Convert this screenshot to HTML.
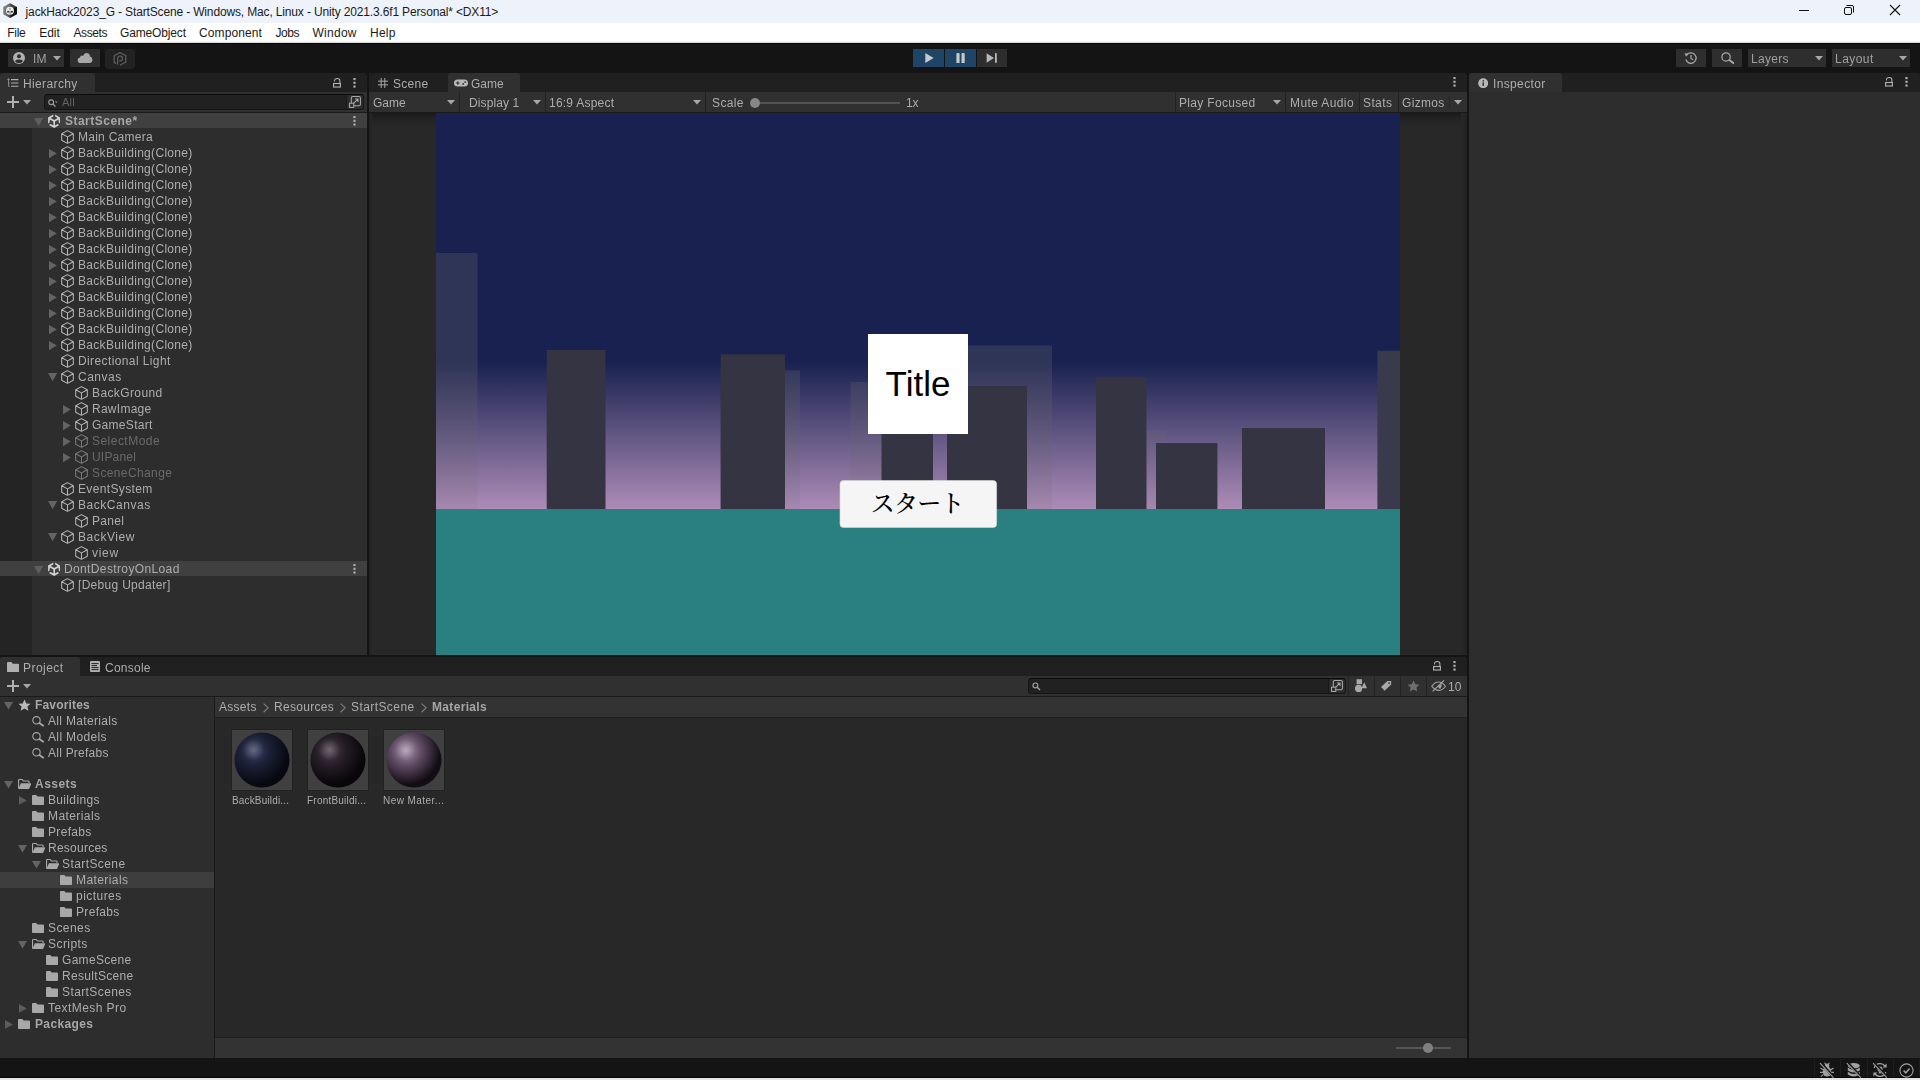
<!DOCTYPE html>
<html lang="en"><head><meta charset="utf-8"><title>Unity Editor</title>
<style>
html,body{margin:0;padding:0;background:#141414;}
body{width:1920px;height:1080px;overflow:hidden;position:relative;font-family:"Liberation Sans","Noto Sans CJK JP",sans-serif;font-size:12px;}
.b,.ic,.t{position:absolute;display:block}
.t{height:16px;line-height:16px;white-space:nowrap;color:#adadad;font-size:12px;letter-spacing:0.2px}
.t{will-change:transform}
.t.win{will-change:auto}
.t.bold{font-weight:bold;letter-spacing:0;color:#a6a6a6}
.t.win{color:#1a1a1a;font-size:12px;letter-spacing:0}
.t.sm{font-size:10px;letter-spacing:0.2px}
</style></head>
<body>
<div class="b" style="left:0px;top:0px;width:1920px;height:23px;background:#eef3fb;"></div>
<div class="b" style="left:0px;top:23px;width:1920px;height:20px;background:#ffffff;"></div>
<div class="b" style="left:0px;top:41px;width:1920px;height:1px;background:#f6f6f6;"></div>
<div class="b" style="left:0px;top:42px;width:1920px;height:1px;background:#dcdcdc;"></div>
<div class="b" style="left:0px;top:43px;width:1920px;height:1037px;background:#141414;"></div>
<div class="b" style="left:0px;top:43px;width:1920px;height:1px;background:#050505;"></div>
<svg class="ic" style="left:3px;top:3.2px" width="14.2" height="15.2" viewBox="0 0 14 15">
<defs><linearGradient id="ug" x1="0" y1="0" x2="1" y2="0"><stop offset="0" stop-color="#8a8a8a"/><stop offset="0.5" stop-color="#4a4a4a"/><stop offset="0.55" stop-color="#151515"/><stop offset="1" stop-color="#0a0a0a"/></linearGradient></defs>
<path d="M7 0.2 L13.8 3.9 V11.1 L7 14.8 L0.2 11.1 V3.9 Z" fill="url(#ug)"/>
<path d="M7 0.2 L13.8 3.9 L7 6 L0.2 3.9Z" fill="#9a9a9a" opacity="0.35"/>
<circle cx="6.9" cy="7.6" r="3.9" fill="#ececec"/>
<circle cx="6.9" cy="5.6" r="0.9" fill="#999"/><circle cx="5" cy="8.6" r="0.95" fill="#333"/><circle cx="8.8" cy="8.6" r="0.95" fill="#222"/>
<path d="M6.9 7.6 V11.2" stroke="#555" stroke-width="0.9"/>
</svg>
<div class="t win" style="left:25.6px;top:4px;letter-spacing:-0.15px;">jackHack2023_G - StartScene - Windows, Mac, Linux - Unity 2021.3.6f1 Personal* &lt;DX11&gt;</div>
<svg class="ic" style="left:1780px;top:0" width="140" height="23" viewBox="0 0 140 23"><path d="M19 10.5 H29" stroke="#111" stroke-width="1"/><rect x="64.5" y="7.5" width="7" height="7" rx="1.5" fill="none" stroke="#111" stroke-width="1"/><path d="M66.5 5.5 H72 Q73.5 5.5 73.5 7 V12.5" fill="none" stroke="#111" stroke-width="1"/><path d="M110 5 L120 15 M120 5 L110 15" stroke="#111" stroke-width="1.1"/></svg>
<div class="t win" style="left:7.2px;top:25px;letter-spacing:-0.26px;">File</div>
<div class="t win" style="left:39.2px;top:25px;letter-spacing:-0.02px;">Edit</div>
<div class="t win" style="left:73.5px;top:25px;letter-spacing:-0.40px;">Assets</div>
<div class="t win" style="left:120px;top:25px;letter-spacing:-0.15px;">GameObject</div>
<div class="t win" style="left:199px;top:25px;letter-spacing:0.10px;">Component</div>
<div class="t win" style="left:275.5px;top:25px;letter-spacing:-0.44px;">Jobs</div>
<div class="t win" style="left:312.5px;top:25px;letter-spacing:0.27px;">Window</div>
<div class="t win" style="left:370px;top:25px;letter-spacing:0.23px;">Help</div>
<div class="b" style="left:8px;top:49px;width:56px;height:18px;background:#2e2e2e;border-radius:1px"></div>
<div class="b" style="left:70px;top:49px;width:30px;height:18px;background:#2e2e2e;border-radius:1px"></div>
<div class="b" style="left:105px;top:49px;width:30px;height:20px;background:#222222;border-radius:3px"></div>
<svg class="ic" style="left:13px;top:52px" width="12" height="12" viewBox="0 0 12 12"><circle cx="6" cy="6" r="6" fill="#b0b0b0"/><circle cx="6" cy="4.3" r="2" fill="#2e2e2e"/><path d="M2.2 9.4 Q2.2 7.4 6 7.4 Q9.8 7.4 9.8 9.4 Q8.4 10.9 6 10.9 Q3.6 10.9 2.2 9.4Z" fill="#2e2e2e"/></svg>
<div class="t" style="left:33px;top:51px;color:#a0a0a0;letter-spacing:0.28px;">IM</div>
<svg class="ic" style="left:53px;top:56px" width="8" height="5" viewBox="0 0 8 5"><path d="M0 0 H8 L4 4.6 Z" fill="#a8a8a8"/></svg>
<svg class="ic" style="left:77px;top:52px" width="16" height="12" viewBox="0 0 16 12"><path d="M3.6 11 Q0.6 11 0.6 8.2 Q0.6 5.8 3 5.5 Q3.2 3.6 5 3.6 Q5.6 3.6 6 3.9 Q7 1 9.6 1 Q12.8 1 13 4.6 Q15.4 5 15.4 7.8 Q15.4 11 12.4 11 Z" fill="#a8a8a8"/></svg>
<svg class="ic" style="left:113px;top:52px" width="14" height="14" viewBox="0 0 14 14"><path d="M3.2 11.6 L1.2 10.4 V3.8 L7 0.6 L12.8 3.8 V10 L7 13.2" fill="none" stroke="#5e5e5e" stroke-width="1.25"/><path d="M4.6 12.6 V6.2 Q4.6 4.2 7 4.2 Q9.6 4.2 9.6 6.6 Q9.6 8.8 7.2 8.8 H6.2" fill="none" stroke="#5e5e5e" stroke-width="1.25"/></svg>
<div class="b" style="left:913px;top:49px;width:31px;height:18px;background:#1f4566;"></div>
<div class="b" style="left:945px;top:49px;width:31px;height:18px;background:#1f4566;"></div>
<div class="b" style="left:977px;top:49px;width:30px;height:18px;background:#2e2e2e;"></div>
<svg class="ic" style="left:924.6px;top:53px" width="9" height="10" viewBox="0 0 9 10"><path d="M0.3 0 L8.6 5 L0.3 10Z" fill="#c8c8c8"/></svg>
<svg class="ic" style="left:956.4px;top:52.8px" width="9" height="10.4" viewBox="0 0 9 10.4"><rect x="0.4" y="0" width="3.2" height="10.4" rx="1" fill="#c8c8c8"/><rect x="5.5" y="0" width="3.2" height="10.4" rx="1" fill="#c8c8c8"/></svg>
<svg class="ic" style="left:986px;top:53px" width="12" height="10" viewBox="0 0 12 10"><path d="M0.6 0.2 L8 5 L0.6 9.8Z" fill="#b8b8b8"/><rect x="9" y="0.2" width="1.8" height="9.6" fill="#b8b8b8"/></svg>
<div class="b" style="left:1676px;top:49px;width:30px;height:18px;background:#2e2e2e;"></div>
<div class="b" style="left:1712px;top:49px;width:30px;height:18px;background:#2e2e2e;"></div>
<div class="b" style="left:1748px;top:49px;width:78px;height:18px;background:#2e2e2e;"></div>
<div class="b" style="left:1832px;top:49px;width:78px;height:18px;background:#2e2e2e;"></div>
<svg class="ic" style="left:1684px;top:51px" width="14" height="14" viewBox="0 0 14 14"><path d="M2.6 4.2 A5.2 5.2 0 1 1 1.9 8.4" fill="none" stroke="#a8a8a8" stroke-width="1.3"/><path d="M0.6 2.2 L4.6 2.6 L2 5.8Z" fill="#a8a8a8"/><path d="M7 4 V7.4 L9.2 8.8" fill="none" stroke="#a8a8a8" stroke-width="1.2"/></svg>
<svg class="ic" style="left:1720.5px;top:52px" width="13.5" height="12" viewBox="0 0 12 10.5"><circle cx="4.5" cy="4.3" r="3.7" fill="none" stroke="#a8a8a8" stroke-width="1.1"/><path d="M7.4 7 L11.2 9.8" stroke="#a8a8a8" stroke-width="1.7" stroke-linecap="round"/></svg>
<div class="t" style="left:1750.5px;top:51px;color:#a0a0a0;letter-spacing:0.31px;">Layers</div>
<svg class="ic" style="left:1815px;top:55.7px" width="8" height="5" viewBox="0 0 8 5"><path d="M0 0 H8 L4 4.6 Z" fill="#a8a8a8"/></svg>
<div class="t" style="left:1834.5px;top:51px;color:#a0a0a0;letter-spacing:0.46px;">Layout</div>
<svg class="ic" style="left:1899px;top:55.7px" width="8" height="5" viewBox="0 0 8 5"><path d="M0 0 H8 L4 4.6 Z" fill="#a8a8a8"/></svg>
<div class="b" style="left:0px;top:73px;width:367px;height:582px;background:#2d2d2d;border-radius:0 4px 0 0"></div>
<div class="b" style="left:0px;top:73px;width:367px;height:19px;background:#202020;border-radius:0 4px 0 0"></div>
<div class="b" style="left:0px;top:73px;width:95px;height:19px;background:#303030;border-radius:3px 3px 0 0"></div>
<svg class="ic" style="left:7px;top:78px" width="12" height="10" viewBox="0 0 12 10"><path d="M4 1.6 H11.4 M4 5 H11.4 M4 8.2 H11.4" stroke="#b0b0b0" stroke-width="1.1"/><path d="M0.2 1.6 H2.8 M1.5 0.3 V8.4 M1.5 5 H2.8 M1.5 8.2 H2.8" stroke="#9a9a9a" stroke-width="0.8" fill="none"/></svg>
<div class="t" style="left:23px;top:76px;letter-spacing:0.37px;">Hierarchy</div>
<svg class="ic" style="left:332.8px;top:77.5px" width="8" height="10" viewBox="0 0 8 10"><path d="M1.5 3.4 V2.9 Q1.5 0.55 4.2 0.55 Q6.9 0.55 6.9 2.9 V5.4" fill="none" stroke="#b0b0b0" stroke-width="1.05"/><rect x="0.6" y="5.5" width="6.8" height="3.5" fill="none" stroke="#b0b0b0" stroke-width="1.15"/></svg>
<svg class="ic" style="left:352.6px;top:77.6px" width="3" height="10" viewBox="0 0 3 10"><rect x="0.4" y="0" width="2.2" height="2.1" fill="#b0b0b0"/><rect x="0.4" y="3.75" width="2.2" height="2.1" fill="#b0b0b0"/><rect x="0.4" y="7.5" width="2.2" height="2.1" fill="#b0b0b0"/></svg>
<div class="b" style="left:0px;top:92px;width:367px;height:20px;background:#303030;"></div>
<div class="b" style="left:0px;top:112px;width:367px;height:1px;background:#1a1a1a;"></div>
<svg class="ic" style="left:7px;top:96px" width="12" height="12" viewBox="0 0 12 12"><path d="M6 0 V12 M0 6 H12" stroke="#b0b0b0" stroke-width="2"/></svg>
<svg class="ic" style="left:23px;top:99.8px" width="8" height="5" viewBox="0 0 8 5"><path d="M0 0 H8 L4 4.6 Z" fill="#a8a8a8"/></svg>
<div class="b" style="left:43.5px;top:94px;width:320px;height:16px;background:#212121;border-radius:3.5px;border:1px solid #151515;border-top-color:#0c0c0c;box-sizing:border-box"></div><div class="b" style="left:345.5px;top:95px;width:17px;height:14px;background:#2c2c2c;border-radius:0 3px 3px 0;border-left:1px solid #171717;box-sizing:border-box"></div>
<svg class="ic" style="left:47.5px;top:98.5px" width="11" height="9" viewBox="0 0 11 9"><circle cx="3.2" cy="3.2" r="2.4" fill="none" stroke="#9a9a9a" stroke-width="1.15"/><path d="M5 5 L7.4 7.6" stroke="#9a9a9a" stroke-width="1.4"/><path d="M6.9 2.6 H9.7 L8.3 4.1Z" fill="#9a9a9a"/></svg>
<div class="t" style="left:62px;top:94px;color:#636363;font-size:11px;">All</div>
<svg class="ic" style="left:349px;top:96px" width="12" height="12" viewBox="0 0 12 12"><rect x="2.3" y="0.55" width="9.1" height="9.1" rx="1.4" fill="none" stroke="#a8a8a8" stroke-width="1.05"/><path d="M4.8 7.2 L8.8 3.2 M6 3 H9 V6" fill="none" stroke="#a8a8a8" stroke-width="1.05"/><rect x="0.55" y="7.2" width="4.2" height="4.2" fill="#2c2c2c" stroke="#a8a8a8" stroke-width="1.05"/></svg>
<div class="b" style="left:0px;top:113px;width:32px;height:542px;background:#242424;"></div>
<div class="b" style="left:0px;top:113px;width:367px;height:15px;background:#404040;"></div>
<svg class="ic" style="left:33.9px;top:117.6px" width="9.2" height="8.2" viewBox="0 0 10 8" preserveAspectRatio="none"><path d="M0 0 H10 L5 8 Z" fill="#5e5e5e"/></svg>
<svg class="ic" style="left:47.8px;top:113.8px" width="12.4" height="14" viewBox="0 0 12.4 14"><polygon points="6.2,0.1 12.3,3.55 12.3,10.45 6.2,13.9 0.1,10.45 0.1,3.55" fill="#d4d4d4"/><polygon points="6.20,1.93 9.86,4.00 6.20,6.07 2.54,4.00" fill="#404040"/><polygon points="10.69,5.40 10.69,9.54 7.03,11.61 7.03,7.47" fill="#404040"/><polygon points="1.71,5.40 5.37,7.47 5.37,11.61 1.71,9.54" fill="#404040"/><path d="M6.20 4.00 L6.20 -0.50 M8.86 8.50 L12.82 10.75 M3.54 8.50 L-0.42 10.75" stroke="#404040" stroke-width="1.9"/></svg>
<div class="t bold" style="left:64.7px;top:113px;letter-spacing:0.48px;">StartScene*</div>
<svg class="ic" style="left:353.1px;top:116.1px" width="3" height="10" viewBox="0 0 3 10"><rect x="0.4" y="0" width="2.2" height="2.1" fill="#b0b0b0"/><rect x="0.4" y="3.75" width="2.2" height="2.1" fill="#b0b0b0"/><rect x="0.4" y="7.5" width="2.2" height="2.1" fill="#b0b0b0"/></svg>
<svg class="ic" style="left:60px;top:129px;opacity:1" width="15" height="16" viewBox="0 0 15 16"><path d="M7.5 1.6 L13.3 4.7 V11.3 L7.5 14.4 L1.7 11.3 V4.7 Z M1.7 4.7 L7.5 7.9 L13.3 4.7 M7.5 7.9 V14.4" fill="none" stroke="#b4b4b4" stroke-width="1.05" stroke-linejoin="round"/></svg>
<div class="t" style="left:77.6px;top:129px;letter-spacing:0.26px;">Main Camera</div>
<svg class="ic" style="left:49.2px;top:148.6px" width="7.8" height="9.2" viewBox="0 0 8 10" preserveAspectRatio="none"><path d="M0 0 L8 5 L0 10 Z" fill="#646464"/></svg>
<svg class="ic" style="left:60px;top:145px;opacity:1" width="15" height="16" viewBox="0 0 15 16"><path d="M7.5 1.6 L13.3 4.7 V11.3 L7.5 14.4 L1.7 11.3 V4.7 Z M1.7 4.7 L7.5 7.9 L13.3 4.7 M7.5 7.9 V14.4" fill="none" stroke="#b4b4b4" stroke-width="1.05" stroke-linejoin="round"/></svg>
<div class="t" style="left:77.6px;top:145px;letter-spacing:0.31px;">BackBuilding(Clone)</div>
<svg class="ic" style="left:49.2px;top:164.6px" width="7.8" height="9.2" viewBox="0 0 8 10" preserveAspectRatio="none"><path d="M0 0 L8 5 L0 10 Z" fill="#646464"/></svg>
<svg class="ic" style="left:60px;top:161px;opacity:1" width="15" height="16" viewBox="0 0 15 16"><path d="M7.5 1.6 L13.3 4.7 V11.3 L7.5 14.4 L1.7 11.3 V4.7 Z M1.7 4.7 L7.5 7.9 L13.3 4.7 M7.5 7.9 V14.4" fill="none" stroke="#b4b4b4" stroke-width="1.05" stroke-linejoin="round"/></svg>
<div class="t" style="left:77.6px;top:161px;letter-spacing:0.31px;">BackBuilding(Clone)</div>
<svg class="ic" style="left:49.2px;top:180.6px" width="7.8" height="9.2" viewBox="0 0 8 10" preserveAspectRatio="none"><path d="M0 0 L8 5 L0 10 Z" fill="#646464"/></svg>
<svg class="ic" style="left:60px;top:177px;opacity:1" width="15" height="16" viewBox="0 0 15 16"><path d="M7.5 1.6 L13.3 4.7 V11.3 L7.5 14.4 L1.7 11.3 V4.7 Z M1.7 4.7 L7.5 7.9 L13.3 4.7 M7.5 7.9 V14.4" fill="none" stroke="#b4b4b4" stroke-width="1.05" stroke-linejoin="round"/></svg>
<div class="t" style="left:77.6px;top:177px;letter-spacing:0.31px;">BackBuilding(Clone)</div>
<svg class="ic" style="left:49.2px;top:196.6px" width="7.8" height="9.2" viewBox="0 0 8 10" preserveAspectRatio="none"><path d="M0 0 L8 5 L0 10 Z" fill="#646464"/></svg>
<svg class="ic" style="left:60px;top:193px;opacity:1" width="15" height="16" viewBox="0 0 15 16"><path d="M7.5 1.6 L13.3 4.7 V11.3 L7.5 14.4 L1.7 11.3 V4.7 Z M1.7 4.7 L7.5 7.9 L13.3 4.7 M7.5 7.9 V14.4" fill="none" stroke="#b4b4b4" stroke-width="1.05" stroke-linejoin="round"/></svg>
<div class="t" style="left:77.6px;top:193px;letter-spacing:0.31px;">BackBuilding(Clone)</div>
<svg class="ic" style="left:49.2px;top:212.6px" width="7.8" height="9.2" viewBox="0 0 8 10" preserveAspectRatio="none"><path d="M0 0 L8 5 L0 10 Z" fill="#646464"/></svg>
<svg class="ic" style="left:60px;top:209px;opacity:1" width="15" height="16" viewBox="0 0 15 16"><path d="M7.5 1.6 L13.3 4.7 V11.3 L7.5 14.4 L1.7 11.3 V4.7 Z M1.7 4.7 L7.5 7.9 L13.3 4.7 M7.5 7.9 V14.4" fill="none" stroke="#b4b4b4" stroke-width="1.05" stroke-linejoin="round"/></svg>
<div class="t" style="left:77.6px;top:209px;letter-spacing:0.31px;">BackBuilding(Clone)</div>
<svg class="ic" style="left:49.2px;top:228.6px" width="7.8" height="9.2" viewBox="0 0 8 10" preserveAspectRatio="none"><path d="M0 0 L8 5 L0 10 Z" fill="#646464"/></svg>
<svg class="ic" style="left:60px;top:225px;opacity:1" width="15" height="16" viewBox="0 0 15 16"><path d="M7.5 1.6 L13.3 4.7 V11.3 L7.5 14.4 L1.7 11.3 V4.7 Z M1.7 4.7 L7.5 7.9 L13.3 4.7 M7.5 7.9 V14.4" fill="none" stroke="#b4b4b4" stroke-width="1.05" stroke-linejoin="round"/></svg>
<div class="t" style="left:77.6px;top:225px;letter-spacing:0.31px;">BackBuilding(Clone)</div>
<svg class="ic" style="left:49.2px;top:244.6px" width="7.8" height="9.2" viewBox="0 0 8 10" preserveAspectRatio="none"><path d="M0 0 L8 5 L0 10 Z" fill="#646464"/></svg>
<svg class="ic" style="left:60px;top:241px;opacity:1" width="15" height="16" viewBox="0 0 15 16"><path d="M7.5 1.6 L13.3 4.7 V11.3 L7.5 14.4 L1.7 11.3 V4.7 Z M1.7 4.7 L7.5 7.9 L13.3 4.7 M7.5 7.9 V14.4" fill="none" stroke="#b4b4b4" stroke-width="1.05" stroke-linejoin="round"/></svg>
<div class="t" style="left:77.6px;top:241px;letter-spacing:0.31px;">BackBuilding(Clone)</div>
<svg class="ic" style="left:49.2px;top:260.6px" width="7.8" height="9.2" viewBox="0 0 8 10" preserveAspectRatio="none"><path d="M0 0 L8 5 L0 10 Z" fill="#646464"/></svg>
<svg class="ic" style="left:60px;top:257px;opacity:1" width="15" height="16" viewBox="0 0 15 16"><path d="M7.5 1.6 L13.3 4.7 V11.3 L7.5 14.4 L1.7 11.3 V4.7 Z M1.7 4.7 L7.5 7.9 L13.3 4.7 M7.5 7.9 V14.4" fill="none" stroke="#b4b4b4" stroke-width="1.05" stroke-linejoin="round"/></svg>
<div class="t" style="left:77.6px;top:257px;letter-spacing:0.31px;">BackBuilding(Clone)</div>
<svg class="ic" style="left:49.2px;top:276.6px" width="7.8" height="9.2" viewBox="0 0 8 10" preserveAspectRatio="none"><path d="M0 0 L8 5 L0 10 Z" fill="#646464"/></svg>
<svg class="ic" style="left:60px;top:273px;opacity:1" width="15" height="16" viewBox="0 0 15 16"><path d="M7.5 1.6 L13.3 4.7 V11.3 L7.5 14.4 L1.7 11.3 V4.7 Z M1.7 4.7 L7.5 7.9 L13.3 4.7 M7.5 7.9 V14.4" fill="none" stroke="#b4b4b4" stroke-width="1.05" stroke-linejoin="round"/></svg>
<div class="t" style="left:77.6px;top:273px;letter-spacing:0.31px;">BackBuilding(Clone)</div>
<svg class="ic" style="left:49.2px;top:292.6px" width="7.8" height="9.2" viewBox="0 0 8 10" preserveAspectRatio="none"><path d="M0 0 L8 5 L0 10 Z" fill="#646464"/></svg>
<svg class="ic" style="left:60px;top:289px;opacity:1" width="15" height="16" viewBox="0 0 15 16"><path d="M7.5 1.6 L13.3 4.7 V11.3 L7.5 14.4 L1.7 11.3 V4.7 Z M1.7 4.7 L7.5 7.9 L13.3 4.7 M7.5 7.9 V14.4" fill="none" stroke="#b4b4b4" stroke-width="1.05" stroke-linejoin="round"/></svg>
<div class="t" style="left:77.6px;top:289px;letter-spacing:0.31px;">BackBuilding(Clone)</div>
<svg class="ic" style="left:49.2px;top:308.6px" width="7.8" height="9.2" viewBox="0 0 8 10" preserveAspectRatio="none"><path d="M0 0 L8 5 L0 10 Z" fill="#646464"/></svg>
<svg class="ic" style="left:60px;top:305px;opacity:1" width="15" height="16" viewBox="0 0 15 16"><path d="M7.5 1.6 L13.3 4.7 V11.3 L7.5 14.4 L1.7 11.3 V4.7 Z M1.7 4.7 L7.5 7.9 L13.3 4.7 M7.5 7.9 V14.4" fill="none" stroke="#b4b4b4" stroke-width="1.05" stroke-linejoin="round"/></svg>
<div class="t" style="left:77.6px;top:305px;letter-spacing:0.31px;">BackBuilding(Clone)</div>
<svg class="ic" style="left:49.2px;top:324.6px" width="7.8" height="9.2" viewBox="0 0 8 10" preserveAspectRatio="none"><path d="M0 0 L8 5 L0 10 Z" fill="#646464"/></svg>
<svg class="ic" style="left:60px;top:321px;opacity:1" width="15" height="16" viewBox="0 0 15 16"><path d="M7.5 1.6 L13.3 4.7 V11.3 L7.5 14.4 L1.7 11.3 V4.7 Z M1.7 4.7 L7.5 7.9 L13.3 4.7 M7.5 7.9 V14.4" fill="none" stroke="#b4b4b4" stroke-width="1.05" stroke-linejoin="round"/></svg>
<div class="t" style="left:77.6px;top:321px;letter-spacing:0.31px;">BackBuilding(Clone)</div>
<svg class="ic" style="left:49.2px;top:340.6px" width="7.8" height="9.2" viewBox="0 0 8 10" preserveAspectRatio="none"><path d="M0 0 L8 5 L0 10 Z" fill="#646464"/></svg>
<svg class="ic" style="left:60px;top:337px;opacity:1" width="15" height="16" viewBox="0 0 15 16"><path d="M7.5 1.6 L13.3 4.7 V11.3 L7.5 14.4 L1.7 11.3 V4.7 Z M1.7 4.7 L7.5 7.9 L13.3 4.7 M7.5 7.9 V14.4" fill="none" stroke="#b4b4b4" stroke-width="1.05" stroke-linejoin="round"/></svg>
<div class="t" style="left:77.6px;top:337px;letter-spacing:0.31px;">BackBuilding(Clone)</div>
<svg class="ic" style="left:60px;top:353px;opacity:1" width="15" height="16" viewBox="0 0 15 16"><path d="M7.5 1.6 L13.3 4.7 V11.3 L7.5 14.4 L1.7 11.3 V4.7 Z M1.7 4.7 L7.5 7.9 L13.3 4.7 M7.5 7.9 V14.4" fill="none" stroke="#b4b4b4" stroke-width="1.05" stroke-linejoin="round"/></svg>
<div class="t" style="left:77.6px;top:353px;letter-spacing:0.39px;">Directional Light</div>
<svg class="ic" style="left:48.3px;top:373.2px" width="9.2" height="8.2" viewBox="0 0 10 8" preserveAspectRatio="none"><path d="M0 0 H10 L5 8 Z" fill="#646464"/></svg>
<svg class="ic" style="left:60px;top:369px;opacity:1" width="15" height="16" viewBox="0 0 15 16"><path d="M7.5 1.6 L13.3 4.7 V11.3 L7.5 14.4 L1.7 11.3 V4.7 Z M1.7 4.7 L7.5 7.9 L13.3 4.7 M7.5 7.9 V14.4" fill="none" stroke="#b4b4b4" stroke-width="1.05" stroke-linejoin="round"/></svg>
<div class="t" style="left:77.6px;top:369px;letter-spacing:0.50px;">Canvas</div>
<svg class="ic" style="left:74px;top:385px;opacity:1" width="15" height="16" viewBox="0 0 15 16"><path d="M7.5 1.6 L13.3 4.7 V11.3 L7.5 14.4 L1.7 11.3 V4.7 Z M1.7 4.7 L7.5 7.9 L13.3 4.7 M7.5 7.9 V14.4" fill="none" stroke="#b4b4b4" stroke-width="1.05" stroke-linejoin="round"/></svg>
<div class="t" style="left:91.6px;top:385px;letter-spacing:0.39px;">BackGround</div>
<svg class="ic" style="left:63.2px;top:404.6px" width="7.8" height="9.2" viewBox="0 0 8 10" preserveAspectRatio="none"><path d="M0 0 L8 5 L0 10 Z" fill="#646464"/></svg>
<svg class="ic" style="left:74px;top:401px;opacity:1" width="15" height="16" viewBox="0 0 15 16"><path d="M7.5 1.6 L13.3 4.7 V11.3 L7.5 14.4 L1.7 11.3 V4.7 Z M1.7 4.7 L7.5 7.9 L13.3 4.7 M7.5 7.9 V14.4" fill="none" stroke="#b4b4b4" stroke-width="1.05" stroke-linejoin="round"/></svg>
<div class="t" style="left:91.6px;top:401px;letter-spacing:0.26px;">RawImage</div>
<svg class="ic" style="left:63.2px;top:420.6px" width="7.8" height="9.2" viewBox="0 0 8 10" preserveAspectRatio="none"><path d="M0 0 L8 5 L0 10 Z" fill="#646464"/></svg>
<svg class="ic" style="left:74px;top:417px;opacity:1" width="15" height="16" viewBox="0 0 15 16"><path d="M7.5 1.6 L13.3 4.7 V11.3 L7.5 14.4 L1.7 11.3 V4.7 Z M1.7 4.7 L7.5 7.9 L13.3 4.7 M7.5 7.9 V14.4" fill="none" stroke="#b4b4b4" stroke-width="1.05" stroke-linejoin="round"/></svg>
<div class="t" style="left:91.6px;top:417px;letter-spacing:0.29px;">GameStart</div>
<svg class="ic" style="left:63.2px;top:436.6px" width="7.8" height="9.2" viewBox="0 0 8 10" preserveAspectRatio="none"><path d="M0 0 L8 5 L0 10 Z" fill="#646464"/></svg>
<svg class="ic" style="left:74px;top:433px;opacity:1" width="15" height="16" viewBox="0 0 15 16"><path d="M7.5 1.6 L13.3 4.7 V11.3 L7.5 14.4 L1.7 11.3 V4.7 Z M1.7 4.7 L7.5 7.9 L13.3 4.7 M7.5 7.9 V14.4" fill="none" stroke="#7a7a7a" stroke-width="1.05" stroke-linejoin="round"/></svg>
<div class="t" style="left:91.6px;top:433px;color:#6a6a6a;letter-spacing:0.47px;">SelectMode</div>
<svg class="ic" style="left:63.2px;top:452.6px" width="7.8" height="9.2" viewBox="0 0 8 10" preserveAspectRatio="none"><path d="M0 0 L8 5 L0 10 Z" fill="#646464"/></svg>
<svg class="ic" style="left:74px;top:449px;opacity:1" width="15" height="16" viewBox="0 0 15 16"><path d="M7.5 1.6 L13.3 4.7 V11.3 L7.5 14.4 L1.7 11.3 V4.7 Z M1.7 4.7 L7.5 7.9 L13.3 4.7 M7.5 7.9 V14.4" fill="none" stroke="#7a7a7a" stroke-width="1.05" stroke-linejoin="round"/></svg>
<div class="t" style="left:91.6px;top:449px;color:#6a6a6a;letter-spacing:0.20px;">UIPanel</div>
<svg class="ic" style="left:74px;top:465px;opacity:1" width="15" height="16" viewBox="0 0 15 16"><path d="M7.5 1.6 L13.3 4.7 V11.3 L7.5 14.4 L1.7 11.3 V4.7 Z M1.7 4.7 L7.5 7.9 L13.3 4.7 M7.5 7.9 V14.4" fill="none" stroke="#7a7a7a" stroke-width="1.05" stroke-linejoin="round"/></svg>
<div class="t" style="left:91.6px;top:465px;color:#6a6a6a;letter-spacing:0.38px;">SceneChange</div>
<svg class="ic" style="left:60px;top:481px;opacity:1" width="15" height="16" viewBox="0 0 15 16"><path d="M7.5 1.6 L13.3 4.7 V11.3 L7.5 14.4 L1.7 11.3 V4.7 Z M1.7 4.7 L7.5 7.9 L13.3 4.7 M7.5 7.9 V14.4" fill="none" stroke="#b4b4b4" stroke-width="1.05" stroke-linejoin="round"/></svg>
<div class="t" style="left:77.6px;top:481px;letter-spacing:0.36px;">EventSystem</div>
<svg class="ic" style="left:48.3px;top:501.2px" width="9.2" height="8.2" viewBox="0 0 10 8" preserveAspectRatio="none"><path d="M0 0 H10 L5 8 Z" fill="#646464"/></svg>
<svg class="ic" style="left:60px;top:497px;opacity:1" width="15" height="16" viewBox="0 0 15 16"><path d="M7.5 1.6 L13.3 4.7 V11.3 L7.5 14.4 L1.7 11.3 V4.7 Z M1.7 4.7 L7.5 7.9 L13.3 4.7 M7.5 7.9 V14.4" fill="none" stroke="#b4b4b4" stroke-width="1.05" stroke-linejoin="round"/></svg>
<div class="t" style="left:77.6px;top:497px;letter-spacing:0.53px;">BackCanvas</div>
<svg class="ic" style="left:74px;top:513px;opacity:1" width="15" height="16" viewBox="0 0 15 16"><path d="M7.5 1.6 L13.3 4.7 V11.3 L7.5 14.4 L1.7 11.3 V4.7 Z M1.7 4.7 L7.5 7.9 L13.3 4.7 M7.5 7.9 V14.4" fill="none" stroke="#b4b4b4" stroke-width="1.05" stroke-linejoin="round"/></svg>
<div class="t" style="left:91.6px;top:513px;letter-spacing:0.32px;">Panel</div>
<svg class="ic" style="left:48.3px;top:533.2px" width="9.2" height="8.2" viewBox="0 0 10 8" preserveAspectRatio="none"><path d="M0 0 H10 L5 8 Z" fill="#646464"/></svg>
<svg class="ic" style="left:60px;top:529px;opacity:1" width="15" height="16" viewBox="0 0 15 16"><path d="M7.5 1.6 L13.3 4.7 V11.3 L7.5 14.4 L1.7 11.3 V4.7 Z M1.7 4.7 L7.5 7.9 L13.3 4.7 M7.5 7.9 V14.4" fill="none" stroke="#b4b4b4" stroke-width="1.05" stroke-linejoin="round"/></svg>
<div class="t" style="left:77.6px;top:529px;letter-spacing:0.57px;">BackView</div>
<svg class="ic" style="left:74px;top:545px;opacity:1" width="15" height="16" viewBox="0 0 15 16"><path d="M7.5 1.6 L13.3 4.7 V11.3 L7.5 14.4 L1.7 11.3 V4.7 Z M1.7 4.7 L7.5 7.9 L13.3 4.7 M7.5 7.9 V14.4" fill="none" stroke="#b4b4b4" stroke-width="1.05" stroke-linejoin="round"/></svg>
<div class="t" style="left:91.6px;top:545px;letter-spacing:0.70px;">view</div>
<div class="b" style="left:0px;top:561px;width:367px;height:15px;background:#404040;"></div>
<svg class="ic" style="left:33.9px;top:565.6px" width="9.2" height="8.2" viewBox="0 0 10 8" preserveAspectRatio="none"><path d="M0 0 H10 L5 8 Z" fill="#5e5e5e"/></svg>
<svg class="ic" style="left:47.8px;top:561.8px" width="12.4" height="14" viewBox="0 0 12.4 14"><polygon points="6.2,0.1 12.3,3.55 12.3,10.45 6.2,13.9 0.1,10.45 0.1,3.55" fill="#d4d4d4"/><polygon points="6.20,1.93 9.86,4.00 6.20,6.07 2.54,4.00" fill="#404040"/><polygon points="10.69,5.40 10.69,9.54 7.03,11.61 7.03,7.47" fill="#404040"/><polygon points="1.71,5.40 5.37,7.47 5.37,11.61 1.71,9.54" fill="#404040"/><path d="M6.20 4.00 L6.20 -0.50 M8.86 8.50 L12.82 10.75 M3.54 8.50 L-0.42 10.75" stroke="#404040" stroke-width="1.9"/></svg>
<div class="t" style="left:63.7px;top:561px;letter-spacing:0.37px;">DontDestroyOnLoad</div>
<svg class="ic" style="left:353.1px;top:564.1px" width="3" height="10" viewBox="0 0 3 10"><rect x="0.4" y="0" width="2.2" height="2.1" fill="#b0b0b0"/><rect x="0.4" y="3.75" width="2.2" height="2.1" fill="#b0b0b0"/><rect x="0.4" y="7.5" width="2.2" height="2.1" fill="#b0b0b0"/></svg>
<svg class="ic" style="left:60px;top:577px;opacity:1" width="15" height="16" viewBox="0 0 15 16"><path d="M7.5 1.6 L13.3 4.7 V11.3 L7.5 14.4 L1.7 11.3 V4.7 Z M1.7 4.7 L7.5 7.9 L13.3 4.7 M7.5 7.9 V14.4" fill="none" stroke="#b4b4b4" stroke-width="1.05" stroke-linejoin="round"/></svg>
<div class="t" style="left:77.6px;top:577px;letter-spacing:0.30px;">[Debug Updater]</div>
<div class="b" style="left:369px;top:73px;width:1098px;height:582px;background:#282828;border-radius:0 4px 0 0"></div>
<div class="b" style="left:369px;top:113px;width:1098px;height:14px;background:linear-gradient(#1a1a1a,#222222 35%,#282828);"></div>
<div class="b" style="left:369px;top:113px;width:3px;height:542px;background:linear-gradient(90deg,#202020,#282828);"></div>
<div class="b" style="left:1461px;top:113px;width:6px;height:542px;background:linear-gradient(90deg,#282828,#222222);"></div>
<div class="b" style="left:369px;top:73px;width:1098px;height:19px;background:#202020;border-radius:0 4px 0 0"></div>
<div class="b" style="left:448px;top:73px;width:72px;height:19px;background:#303030;border-radius:3px 3px 0 0"></div>
<svg class="ic" style="left:377.5px;top:78px" width="10" height="10" viewBox="0 0 10 10"><path d="M3.2 0 V10 M6.8 0 V10 M0 3.2 H10 M0 6.8 H10" stroke="#a8a8a8" stroke-width="1"/></svg>
<div class="t" style="left:393px;top:76px;letter-spacing:0.30px;">Scene</div>
<svg class="ic" style="left:454px;top:79px" width="14" height="8" viewBox="0 0 14 8"><rect x="0" y="0.4" width="14" height="7.2" rx="3.6" fill="#b8b8b8"/><path d="M3.8 2.2 V5.8 M2 4 H5.6" stroke="#303030" stroke-width="1.1"/><circle cx="9.2" cy="4.9" r="0.9" fill="#303030"/><circle cx="11.2" cy="3.1" r="0.9" fill="#303030"/></svg>
<div class="t" style="left:470.7px;top:76px;letter-spacing:0.01px;">Game</div>
<svg class="ic" style="left:1452.7px;top:77.1px" width="3" height="10" viewBox="0 0 3 10"><rect x="0.4" y="0" width="2.2" height="2.1" fill="#b0b0b0"/><rect x="0.4" y="3.75" width="2.2" height="2.1" fill="#b0b0b0"/><rect x="0.4" y="7.5" width="2.2" height="2.1" fill="#b0b0b0"/></svg>
<div class="b" style="left:369px;top:92px;width:1098px;height:20px;background:#303030;"></div>
<div class="b" style="left:369px;top:112px;width:1098px;height:1px;background:#1a1a1a;"></div>
<div class="b" style="left:459px;top:92px;width:1px;height:20px;background:#222222;"></div>
<div class="b" style="left:545px;top:92px;width:1px;height:20px;background:#222222;"></div>
<div class="b" style="left:705px;top:92px;width:1px;height:20px;background:#222222;"></div>
<div class="b" style="left:1175px;top:92px;width:1px;height:20px;background:#222222;"></div>
<div class="b" style="left:1285px;top:92px;width:1px;height:20px;background:#222222;"></div>
<div class="b" style="left:1359px;top:92px;width:1px;height:20px;background:#222222;"></div>
<div class="b" style="left:1398px;top:92px;width:1px;height:20px;background:#222222;"></div>
<div class="b" style="left:1449px;top:96px;width:1px;height:12px;background:#262626;"></div>
<div class="t" style="left:372.7px;top:95px;letter-spacing:0.01px;">Game</div>
<svg class="ic" style="left:447.3px;top:100px" width="8" height="5" viewBox="0 0 8 5"><path d="M0 0 H8 L4 4.6 Z" fill="#a8a8a8"/></svg>
<div class="t" style="left:468.5px;top:95px;letter-spacing:0.11px;">Display 1</div>
<svg class="ic" style="left:533.2px;top:100px" width="8" height="5" viewBox="0 0 8 5"><path d="M0 0 H8 L4 4.6 Z" fill="#a8a8a8"/></svg>
<div class="t" style="left:548.5px;top:95px;letter-spacing:0.23px;">16:9 Aspect</div>
<svg class="ic" style="left:692.8px;top:100px" width="8" height="5" viewBox="0 0 8 5"><path d="M0 0 H8 L4 4.6 Z" fill="#a8a8a8"/></svg>
<div class="t" style="left:711.5px;top:95px;letter-spacing:0.38px;">Scale</div>
<div class="b" style="left:755px;top:102px;width:145px;height:2px;background:#535353;"></div>
<div class="b" style="left:750px;top:98px;width:10px;height:10px;background:#878787;border-radius:5px"></div>
<div class="t" style="left:906px;top:95px;letter-spacing:-0.09px;">1x</div>
<div class="t" style="left:1178.5px;top:95px;letter-spacing:0.32px;">Play Focused</div>
<svg class="ic" style="left:1273.3px;top:100px" width="8" height="5" viewBox="0 0 8 5"><path d="M0 0 H8 L4 4.6 Z" fill="#a8a8a8"/></svg>
<div class="t" style="left:1289.8px;top:95px;letter-spacing:0.39px;">Mute Audio</div>
<div class="t" style="left:1362.7px;top:95px;letter-spacing:0.39px;">Stats</div>
<div class="t" style="left:1401.5px;top:95px;letter-spacing:0.32px;">Gizmos</div>
<svg class="ic" style="left:1454px;top:100px" width="8" height="5" viewBox="0 0 8 5"><path d="M0 0 H8 L4 4.6 Z" fill="#a8a8a8"/></svg>
<svg class="ic" style="left:436px;top:113px" width="964" height="542" viewBox="0 0 964 542"><defs><linearGradient id="sky" x1="0" y1="0" x2="0" y2="1"><stop offset="0" stop-color="#182150"/><stop offset="0.628" stop-color="#182150"/><stop offset="1" stop-color="#ad8cb7"/></linearGradient><linearGradient id="far" gradientUnits="userSpaceOnUse" x1="0" y1="0" x2="0" y2="396"><stop offset="0" stop-color="#686868" stop-opacity="0.29"/><stop offset="0.62" stop-color="#686868" stop-opacity="0.29"/><stop offset="1" stop-color="#686868" stop-opacity="0.10"/></linearGradient></defs><rect width="964" height="396" fill="url(#sky)"/><rect y="396" width="964" height="146" fill="#2a8080"/><rect x="0.0" y="140.0" width="41.5" height="256.0" fill="url(#far)"/><rect x="349.0" y="257.5" width="15.0" height="138.5" fill="url(#far)"/><rect x="414.5" y="269.0" width="49.5" height="127.0" fill="url(#far)"/><rect x="524.0" y="232.5" width="92.0" height="163.5" fill="url(#far)"/><rect x="710.5" y="318.0" width="20.0" height="78.0" fill="url(#far)"/><rect x="110.7" y="237.0" width="58.8" height="159.0" fill="#343442"/><rect x="284.6" y="241.3" width="64.4" height="154.7" fill="#343442"/><rect x="445.5" y="287.0" width="51.5" height="109.0" fill="#343442"/><rect x="511.0" y="273.0" width="80.0" height="123.0" fill="#343442"/><rect x="660.0" y="264.3" width="50.5" height="131.7" fill="#343442"/><rect x="720.0" y="330.0" width="61.4" height="66.0" fill="#343442"/><rect x="806.0" y="315.0" width="83.0" height="81.0" fill="#343442"/><rect x="941.4" y="237.7" width="22.6" height="158.3" fill="#393a4b"/><rect x="432" y="221" width="100" height="100" fill="#ffffff"/><text x="482" y="283.3" text-anchor="middle" font-family="Liberation Sans, sans-serif" font-size="35" fill="#000">Title</text><rect x="404" y="367.5" width="156.6" height="47" rx="3.5" fill="#f5f5f5" stroke="#d8d8d8" stroke-width="0.6"/><text x="481.2" y="399" text-anchor="middle" font-family="Noto Serif CJK SC, Noto Serif CJK JP, serif" font-size="24" font-weight="500" letter-spacing="-0.8" fill="#000">スタート</text></svg>
<div class="b" style="left:1469px;top:73px;width:451px;height:985px;background:#2d2d2d;border-radius:0 4px 0 0"></div>
<div class="b" style="left:1469px;top:73px;width:451px;height:19px;background:#202020;border-radius:0 4px 0 0"></div>
<div class="b" style="left:1469px;top:73px;width:93px;height:19px;background:#303030;border-radius:3px 3px 0 0"></div>
<svg class="ic" style="left:1477.8px;top:77.9px" width="10.4" height="10.4" viewBox="0 0 11 11"><circle cx="5.5" cy="5.5" r="5.3" fill="#b8b8b8"/><rect x="4.8" y="4.6" width="1.5" height="3.8" fill="#303030"/><rect x="4.8" y="2.3" width="1.5" height="1.5" fill="#303030"/></svg>
<div class="t" style="left:1492.5px;top:76px;letter-spacing:0.36px;">Inspector</div>
<svg class="ic" style="left:1884.8px;top:77.3px" width="8" height="10" viewBox="0 0 8 10"><path d="M1.5 3.4 V2.9 Q1.5 0.55 4.2 0.55 Q6.9 0.55 6.9 2.9 V5.4" fill="none" stroke="#b0b0b0" stroke-width="1.05"/><rect x="0.6" y="5.5" width="6.8" height="3.5" fill="none" stroke="#b0b0b0" stroke-width="1.15"/></svg>
<svg class="ic" style="left:1904.6px;top:77.4px" width="3" height="10" viewBox="0 0 3 10"><rect x="0.4" y="0" width="2.2" height="2.1" fill="#b0b0b0"/><rect x="0.4" y="3.75" width="2.2" height="2.1" fill="#b0b0b0"/><rect x="0.4" y="7.5" width="2.2" height="2.1" fill="#b0b0b0"/></svg>
<div class="b" style="left:0px;top:657px;width:1467px;height:401px;background:#2d2d2d;border-radius:0 4px 0 0"></div>
<div class="b" style="left:0px;top:657px;width:1467px;height:19px;background:#202020;border-radius:0 4px 0 0"></div>
<div class="b" style="left:0px;top:657px;width:80px;height:19px;background:#303030;border-radius:3px 3px 0 0"></div>
<svg class="ic" style="left:7px;top:662px" width="12.2" height="10.2" viewBox="0 0 12 10" preserveAspectRatio="none"><path d="M0 1 Q0 0 1 0 H4.3 L5.7 1.6 H11 Q12 1.6 12 2.6 V9.2 Q12 10 11.2 10 H0.8 Q0 10 0 9.2 Z" fill="#b0b0b0"/></svg>
<div class="t" style="left:22.5px;top:660px;letter-spacing:0.46px;">Project</div>
<svg class="ic" style="left:90px;top:661px" width="10" height="11" viewBox="0 0 10 11"><rect x="0" y="0" width="10" height="11" rx="1" fill="#b0b0b0"/><path d="M1.5 2.6 H8.5 M1.5 4.6 H7 M1.5 6.6 H8.5 M1.5 8.6 H8.5" stroke="#202020" stroke-width="1"/></svg>
<div class="t" style="left:105px;top:660px;letter-spacing:0.25px;">Console</div>
<svg class="ic" style="left:1433px;top:661.2px" width="8" height="10" viewBox="0 0 8 10"><path d="M1.5 3.4 V2.9 Q1.5 0.55 4.2 0.55 Q6.9 0.55 6.9 2.9 V5.4" fill="none" stroke="#b0b0b0" stroke-width="1.05"/><rect x="0.6" y="5.5" width="6.8" height="3.5" fill="none" stroke="#b0b0b0" stroke-width="1.15"/></svg>
<svg class="ic" style="left:1452.6px;top:661.3px" width="3" height="10" viewBox="0 0 3 10"><rect x="0.4" y="0" width="2.2" height="2.1" fill="#b0b0b0"/><rect x="0.4" y="3.75" width="2.2" height="2.1" fill="#b0b0b0"/><rect x="0.4" y="7.5" width="2.2" height="2.1" fill="#b0b0b0"/></svg>
<div class="b" style="left:0px;top:676px;width:1467px;height:20px;background:#303030;"></div>
<div class="b" style="left:0px;top:696px;width:1467px;height:1px;background:#1a1a1a;"></div>
<svg class="ic" style="left:7px;top:680px" width="12" height="12" viewBox="0 0 12 12"><path d="M6 0 V12 M0 6 H12" stroke="#b0b0b0" stroke-width="2"/></svg>
<svg class="ic" style="left:23px;top:684px" width="8" height="5" viewBox="0 0 8 5"><path d="M0 0 H8 L4 4.6 Z" fill="#a8a8a8"/></svg>
<div class="b" style="left:1028px;top:678px;width:318px;height:16px;background:#212121;border-radius:3.5px;border:1px solid #151515;border-top-color:#0c0c0c;box-sizing:border-box"></div><div class="b" style="left:1328px;top:679px;width:17px;height:14px;background:#2c2c2c;border-radius:0 3px 3px 0;border-left:1px solid #171717;box-sizing:border-box"></div>
<svg class="ic" style="left:1032px;top:682px" width="9" height="9" viewBox="0 0 9 9"><circle cx="3.4" cy="3.4" r="2.4" fill="none" stroke="#a0a0a0" stroke-width="1.2"/><path d="M5.2 5.2 L8 8" stroke="#a0a0a0" stroke-width="1.4"/></svg>
<svg class="ic" style="left:1331px;top:680px" width="12" height="12" viewBox="0 0 12 12"><rect x="2.3" y="0.55" width="9.1" height="9.1" rx="1.4" fill="none" stroke="#a8a8a8" stroke-width="1.05"/><path d="M4.8 7.2 L8.8 3.2 M6 3 H9 V6" fill="none" stroke="#a8a8a8" stroke-width="1.05"/><rect x="0.55" y="7.2" width="4.2" height="4.2" fill="#2c2c2c" stroke="#a8a8a8" stroke-width="1.05"/></svg>
<div class="b" style="left:1348px;top:676px;width:1px;height:20px;background:#232323;"></div>
<div class="b" style="left:1374px;top:676px;width:1px;height:20px;background:#232323;"></div>
<div class="b" style="left:1400px;top:676px;width:1px;height:20px;background:#232323;"></div>
<div class="b" style="left:1426px;top:676px;width:1px;height:20px;background:#232323;"></div>
<svg class="ic" style="left:1354px;top:679px" width="14" height="14" viewBox="0 0 14 14"><rect x="2.6" y="0.2" width="5.4" height="5" fill="#a8a8a8"/><path d="M10.2 3.2 L13 9.2 H7.4Z" fill="#a8a8a8"/><circle cx="4.6" cy="9.4" r="3.6" fill="#a8a8a8"/></svg>
<svg class="ic" style="left:1380px;top:680px" width="12" height="12" viewBox="0 0 12 12"><path d="M1 7 L7.4 1 H11.2 V4.4 L4.6 10.8Z" fill="#a8a8a8"/><circle cx="9.1" cy="3.1" r="0.9" fill="#303030"/></svg>
<svg class="ic" style="left:1406.5px;top:680px" width="13" height="12" viewBox="0 0 13 12"><path d="M6.5 0.4 L8.3 4.2 L12.5 4.7 L9.4 7.5 L10.3 11.6 L6.5 9.5 L2.7 11.6 L3.6 7.5 L0.5 4.7 L4.7 4.2Z" fill="#6e6e6e"/></svg>
<svg class="ic" style="left:1431px;top:680px" width="16" height="12" viewBox="0 0 16 12"><path d="M0.8 6.2 Q4 2 7.6 2 Q11.4 2 14.4 6.2 Q11.4 10.4 7.6 10.4 Q4 10.4 0.8 6.2Z" fill="none" stroke="#a0a0a0" stroke-width="1.1"/><path d="M7 6.4 Q8 4.4 10.6 4 Q11.4 6.6 9.6 8.4 Q8 9.4 7 6.4Z" fill="#a0a0a0"/><path d="M1.6 11.4 L13 0.4" stroke="#a0a0a0" stroke-width="1.2"/></svg>
<div class="t" style="left:1448.3px;top:679px;letter-spacing:0.03px;">10</div>
<div class="b" style="left:214px;top:697px;width:1px;height:361px;background:#1a1a1a;"></div>
<div class="b" style="left:215px;top:697px;width:1252px;height:361px;background:#282828;"></div>
<div class="b" style="left:215px;top:697px;width:1252px;height:20px;background:#333333;"></div>
<div class="b" style="left:215px;top:717px;width:1252px;height:1px;background:#1e1e1e;"></div>
<div class="b" style="left:215px;top:1038px;width:1252px;height:20px;background:#333333;"></div>
<div class="b" style="left:215px;top:1037px;width:1252px;height:1px;background:#1e1e1e;"></div>
<svg class="ic" style="left:3.9000000000000004px;top:702px" width="9" height="7.6" viewBox="0 0 10 8" preserveAspectRatio="none"><path d="M0 0 H10 L5 8 Z" fill="#646464"/></svg>
<svg class="ic" style="left:18px;top:699px" width="13" height="12" viewBox="0 0 13 12"><path d="M6.5 0.4 L8.3 4.4 L12.6 4.8 L9.4 7.6 L10.4 11.8 L6.5 9.6 L2.6 11.8 L3.6 7.6 L0.4 4.8 L4.7 4.4Z" fill="#b8b8b8"/></svg>
<div class="t bold" style="left:34.6px;top:697px;letter-spacing:0.16px;">Favorites</div>
<svg class="ic" style="left:32px;top:716px" width="12" height="10.5" viewBox="0 0 12 10.5"><circle cx="4.5" cy="4.3" r="3.7" fill="none" stroke="#a8a8a8" stroke-width="1.1"/><path d="M7.4 7 L11.2 9.8" stroke="#a8a8a8" stroke-width="1.7" stroke-linecap="round"/></svg>
<div class="t" style="left:47.6px;top:713px;letter-spacing:0.33px;">All Materials</div>
<svg class="ic" style="left:32px;top:732px" width="12" height="10.5" viewBox="0 0 12 10.5"><circle cx="4.5" cy="4.3" r="3.7" fill="none" stroke="#a8a8a8" stroke-width="1.1"/><path d="M7.4 7 L11.2 9.8" stroke="#a8a8a8" stroke-width="1.7" stroke-linecap="round"/></svg>
<div class="t" style="left:47.6px;top:729px;letter-spacing:0.36px;">All Models</div>
<svg class="ic" style="left:32px;top:748px" width="12" height="10.5" viewBox="0 0 12 10.5"><circle cx="4.5" cy="4.3" r="3.7" fill="none" stroke="#a8a8a8" stroke-width="1.1"/><path d="M7.4 7 L11.2 9.8" stroke="#a8a8a8" stroke-width="1.7" stroke-linecap="round"/></svg>
<div class="t" style="left:47.6px;top:745px;letter-spacing:0.24px;">All Prefabs</div>
<svg class="ic" style="left:3.9000000000000004px;top:781px" width="9" height="7.6" viewBox="0 0 10 8" preserveAspectRatio="none"><path d="M0 0 H10 L5 8 Z" fill="#646464"/></svg>
<svg class="ic" style="left:17.8px;top:779px" width="13.6" height="10" viewBox="0 0 13.6 10"><path d="M0.55 9.6 V1.2 Q0.55 0.55 1.2 0.55 H4.2 L5.5 2 H10.4 Q11 2 11 2.6 V4" fill="none" stroke="#a8a8a8" stroke-width="1.1"/><path d="M0.4 10 L2.9 4.2 H13.6 L11.2 9.4 Q10.9 10 10.2 10 Z" fill="#a8a8a8"/></svg>
<div class="t bold" style="left:34.6px;top:776px;letter-spacing:0.46px;">Assets</div>
<svg class="ic" style="left:19px;top:795.8px" width="7.9" height="8.8" viewBox="0 0 8 10" preserveAspectRatio="none"><path d="M0 0 L8 5 L0 10 Z" fill="#5c5c5c"/></svg>
<svg class="ic" style="left:32px;top:795px" width="12" height="10" viewBox="0 0 12 10" preserveAspectRatio="none"><path d="M0 1 Q0 0 1 0 H4.3 L5.7 1.6 H11 Q12 1.6 12 2.6 V9.2 Q12 10 11.2 10 H0.8 Q0 10 0 9.2 Z" fill="#a8a8a8"/></svg>
<div class="t" style="left:47.6px;top:792px;letter-spacing:0.34px;">Buildings</div>
<svg class="ic" style="left:32px;top:811px" width="12" height="10" viewBox="0 0 12 10" preserveAspectRatio="none"><path d="M0 1 Q0 0 1 0 H4.3 L5.7 1.6 H11 Q12 1.6 12 2.6 V9.2 Q12 10 11.2 10 H0.8 Q0 10 0 9.2 Z" fill="#a8a8a8"/></svg>
<div class="t" style="left:47.6px;top:808px;letter-spacing:0.41px;">Materials</div>
<svg class="ic" style="left:32px;top:827px" width="12" height="10" viewBox="0 0 12 10" preserveAspectRatio="none"><path d="M0 1 Q0 0 1 0 H4.3 L5.7 1.6 H11 Q12 1.6 12 2.6 V9.2 Q12 10 11.2 10 H0.8 Q0 10 0 9.2 Z" fill="#a8a8a8"/></svg>
<div class="t" style="left:47.6px;top:824px;letter-spacing:0.33px;">Prefabs</div>
<svg class="ic" style="left:17.9px;top:845px" width="9" height="7.6" viewBox="0 0 10 8" preserveAspectRatio="none"><path d="M0 0 H10 L5 8 Z" fill="#646464"/></svg>
<svg class="ic" style="left:31.8px;top:843px" width="13.6" height="10" viewBox="0 0 13.6 10"><path d="M0.55 9.6 V1.2 Q0.55 0.55 1.2 0.55 H4.2 L5.5 2 H10.4 Q11 2 11 2.6 V4" fill="none" stroke="#a8a8a8" stroke-width="1.1"/><path d="M0.4 10 L2.9 4.2 H13.6 L11.2 9.4 Q10.9 10 10.2 10 Z" fill="#a8a8a8"/></svg>
<div class="t" style="left:47.6px;top:840px;letter-spacing:0.25px;">Resources</div>
<svg class="ic" style="left:31.9px;top:861px" width="9" height="7.6" viewBox="0 0 10 8" preserveAspectRatio="none"><path d="M0 0 H10 L5 8 Z" fill="#646464"/></svg>
<svg class="ic" style="left:45.8px;top:859px" width="13.6" height="10" viewBox="0 0 13.6 10"><path d="M0.55 9.6 V1.2 Q0.55 0.55 1.2 0.55 H4.2 L5.5 2 H10.4 Q11 2 11 2.6 V4" fill="none" stroke="#a8a8a8" stroke-width="1.1"/><path d="M0.4 10 L2.9 4.2 H13.6 L11.2 9.4 Q10.9 10 10.2 10 Z" fill="#a8a8a8"/></svg>
<div class="t" style="left:61.6px;top:856px;letter-spacing:0.41px;">StartScene</div>
<div class="b" style="left:0px;top:872px;width:214px;height:16px;background:#3e3e3e;"></div>
<svg class="ic" style="left:60px;top:875px" width="12" height="10" viewBox="0 0 12 10" preserveAspectRatio="none"><path d="M0 1 Q0 0 1 0 H4.3 L5.7 1.6 H11 Q12 1.6 12 2.6 V9.2 Q12 10 11.2 10 H0.8 Q0 10 0 9.2 Z" fill="#a8a8a8"/></svg>
<div class="t" style="left:75.6px;top:872px;letter-spacing:0.41px;">Materials</div>
<svg class="ic" style="left:60px;top:891px" width="12" height="10" viewBox="0 0 12 10" preserveAspectRatio="none"><path d="M0 1 Q0 0 1 0 H4.3 L5.7 1.6 H11 Q12 1.6 12 2.6 V9.2 Q12 10 11.2 10 H0.8 Q0 10 0 9.2 Z" fill="#a8a8a8"/></svg>
<div class="t" style="left:75.6px;top:888px;letter-spacing:0.46px;">pictures</div>
<svg class="ic" style="left:60px;top:907px" width="12" height="10" viewBox="0 0 12 10" preserveAspectRatio="none"><path d="M0 1 Q0 0 1 0 H4.3 L5.7 1.6 H11 Q12 1.6 12 2.6 V9.2 Q12 10 11.2 10 H0.8 Q0 10 0 9.2 Z" fill="#a8a8a8"/></svg>
<div class="t" style="left:75.6px;top:904px;letter-spacing:0.33px;">Prefabs</div>
<svg class="ic" style="left:32px;top:923px" width="12" height="10" viewBox="0 0 12 10" preserveAspectRatio="none"><path d="M0 1 Q0 0 1 0 H4.3 L5.7 1.6 H11 Q12 1.6 12 2.6 V9.2 Q12 10 11.2 10 H0.8 Q0 10 0 9.2 Z" fill="#a8a8a8"/></svg>
<div class="t" style="left:47.6px;top:920px;letter-spacing:0.43px;">Scenes</div>
<svg class="ic" style="left:17.9px;top:941px" width="9" height="7.6" viewBox="0 0 10 8" preserveAspectRatio="none"><path d="M0 0 H10 L5 8 Z" fill="#646464"/></svg>
<svg class="ic" style="left:31.8px;top:939px" width="13.6" height="10" viewBox="0 0 13.6 10"><path d="M0.55 9.6 V1.2 Q0.55 0.55 1.2 0.55 H4.2 L5.5 2 H10.4 Q11 2 11 2.6 V4" fill="none" stroke="#a8a8a8" stroke-width="1.1"/><path d="M0.4 10 L2.9 4.2 H13.6 L11.2 9.4 Q10.9 10 10.2 10 Z" fill="#a8a8a8"/></svg>
<div class="t" style="left:47.6px;top:936px;letter-spacing:0.45px;">Scripts</div>
<svg class="ic" style="left:46px;top:955px" width="12" height="10" viewBox="0 0 12 10" preserveAspectRatio="none"><path d="M0 1 Q0 0 1 0 H4.3 L5.7 1.6 H11 Q12 1.6 12 2.6 V9.2 Q12 10 11.2 10 H0.8 Q0 10 0 9.2 Z" fill="#a8a8a8"/></svg>
<div class="t" style="left:61.6px;top:952px;letter-spacing:0.30px;">GameScene</div>
<svg class="ic" style="left:46px;top:971px" width="12" height="10" viewBox="0 0 12 10" preserveAspectRatio="none"><path d="M0 1 Q0 0 1 0 H4.3 L5.7 1.6 H11 Q12 1.6 12 2.6 V9.2 Q12 10 11.2 10 H0.8 Q0 10 0 9.2 Z" fill="#a8a8a8"/></svg>
<div class="t" style="left:61.6px;top:968px;letter-spacing:0.32px;">ResultScene</div>
<svg class="ic" style="left:46px;top:987px" width="12" height="10" viewBox="0 0 12 10" preserveAspectRatio="none"><path d="M0 1 Q0 0 1 0 H4.3 L5.7 1.6 H11 Q12 1.6 12 2.6 V9.2 Q12 10 11.2 10 H0.8 Q0 10 0 9.2 Z" fill="#a8a8a8"/></svg>
<div class="t" style="left:61.6px;top:984px;letter-spacing:0.40px;">StartScenes</div>
<svg class="ic" style="left:19px;top:1003.8px" width="7.9" height="8.8" viewBox="0 0 8 10" preserveAspectRatio="none"><path d="M0 0 L8 5 L0 10 Z" fill="#5c5c5c"/></svg>
<svg class="ic" style="left:32px;top:1003px" width="12" height="10" viewBox="0 0 12 10" preserveAspectRatio="none"><path d="M0 1 Q0 0 1 0 H4.3 L5.7 1.6 H11 Q12 1.6 12 2.6 V9.2 Q12 10 11.2 10 H0.8 Q0 10 0 9.2 Z" fill="#a8a8a8"/></svg>
<div class="t" style="left:47.6px;top:1000px;letter-spacing:0.43px;">TextMesh Pro</div>
<svg class="ic" style="left:5px;top:1019.8px" width="7.9" height="8.8" viewBox="0 0 8 10" preserveAspectRatio="none"><path d="M0 0 L8 5 L0 10 Z" fill="#5c5c5c"/></svg>
<svg class="ic" style="left:18px;top:1019px" width="12" height="10" viewBox="0 0 12 10" preserveAspectRatio="none"><path d="M0 1 Q0 0 1 0 H4.3 L5.7 1.6 H11 Q12 1.6 12 2.6 V9.2 Q12 10 11.2 10 H0.8 Q0 10 0 9.2 Z" fill="#a8a8a8"/></svg>
<div class="t bold" style="left:34.6px;top:1016px;letter-spacing:0.35px;">Packages</div>
<div class="t" style="left:218.5px;top:699px;letter-spacing:0.28px;">Assets</div>
<div class="t" style="left:273.5px;top:699px;letter-spacing:0.30px;">Resources</div>
<div class="t" style="left:350.5px;top:699px;letter-spacing:0.42px;">StartScene</div>
<div class="t bold" style="left:431.5px;top:699px;letter-spacing:0.33px;">Materials</div>
<svg class="ic" style="left:262.8px;top:702.5px" width="6" height="10" viewBox="0 0 6 10"><path d="M0.6 0.6 L5.2 4.8 L0.6 9.2" fill="none" stroke="#7a7a7a" stroke-width="1.2"/></svg>
<svg class="ic" style="left:339.6px;top:702.5px" width="6" height="10" viewBox="0 0 6 10"><path d="M0.6 0.6 L5.2 4.8 L0.6 9.2" fill="none" stroke="#7a7a7a" stroke-width="1.2"/></svg>
<svg class="ic" style="left:420.7px;top:702.5px" width="6" height="10" viewBox="0 0 6 10"><path d="M0.6 0.6 L5.2 4.8 L0.6 9.2" fill="none" stroke="#7a7a7a" stroke-width="1.2"/></svg>
<svg class="ic" style="left:0;top:0" width="0" height="0"><defs><radialGradient id="m0" cx="0.36" cy="0.33" r="0.62"><stop offset="0" stop-color="#3a4264"/><stop offset="0.45" stop-color="#1c2036"/><stop offset="1" stop-color="#070810"/></radialGradient><radialGradient id="m1" cx="0.36" cy="0.33" r="0.62"><stop offset="0" stop-color="#4a3e4a"/><stop offset="0.45" stop-color="#241c26"/><stop offset="1" stop-color="#080608"/></radialGradient><radialGradient id="m2" cx="0.36" cy="0.33" r="0.62"><stop offset="0" stop-color="#a890ac"/><stop offset="0.45" stop-color="#5e4a62"/><stop offset="1" stop-color="#120c14"/></radialGradient><radialGradient id="spec" cx="0.34" cy="0.31" r="0.2"><stop offset="0" stop-color="#fff" stop-opacity="0.22"/><stop offset="1" stop-color="#fff" stop-opacity="0"/></radialGradient></defs></svg>
<div class="b" style="left:232px;top:730px;width:60px;height:60px;background:#404040;box-shadow:0 0 0 0.6px #1f1f1f"></div>
<svg class="ic" style="left:234px;top:732px" width="56" height="56" viewBox="0 0 56 56"><circle cx="28" cy="28" r="27.5" fill="url(#m0)"/><circle cx="28" cy="28" r="27.5" fill="url(#spec)"/></svg>
<div class="t sm" style="left:231.7px;top:793px;letter-spacing:0.16px;">BackBuildi...</div>
<div class="b" style="left:308px;top:730px;width:60px;height:60px;background:#404040;box-shadow:0 0 0 0.6px #1f1f1f"></div>
<svg class="ic" style="left:310px;top:732px" width="56" height="56" viewBox="0 0 56 56"><circle cx="28" cy="28" r="27.5" fill="url(#m1)"/><circle cx="28" cy="28" r="27.5" fill="url(#spec)"/></svg>
<div class="t sm" style="left:306.7px;top:793px;letter-spacing:0.22px;">FrontBuildi...</div>
<div class="b" style="left:384px;top:730px;width:60px;height:60px;background:#404040;box-shadow:0 0 0 0.6px #1f1f1f"></div>
<svg class="ic" style="left:386px;top:732px" width="56" height="56" viewBox="0 0 56 56"><circle cx="28" cy="28" r="27.5" fill="url(#m2)"/><circle cx="28" cy="28" r="27.5" fill="url(#spec)"/></svg>
<div class="t sm" style="left:382.8px;top:793px;letter-spacing:0.44px;">New Mater...</div>
<div class="b" style="left:1396px;top:1047px;width:55px;height:2px;background:#555555;"></div>
<div class="b" style="left:1423px;top:1043px;width:10px;height:10px;background:#808080;border-radius:5px"></div>
<div class="b" style="left:0px;top:1077px;width:1920px;height:1px;background:#080808;"></div>
<div class="b" style="left:0px;top:1078px;width:1920px;height:2px;background:#e6e6e6;"></div>
<div class="b" style="left:1814px;top:1059px;width:1px;height:18px;background:#1e1e1e;"></div>
<div class="b" style="left:1840px;top:1059px;width:1px;height:18px;background:#1e1e1e;"></div>
<div class="b" style="left:1866.5px;top:1059px;width:1px;height:18px;background:#1e1e1e;"></div>
<div class="b" style="left:1893px;top:1059px;width:1px;height:18px;background:#1e1e1e;"></div>
<div class="b" style="left:1918.5px;top:1059px;width:1px;height:18px;background:#1e1e1e;"></div>
<svg class="ic" style="left:1819px;top:1062px" width="16" height="16" viewBox="0 0 16 16"><ellipse cx="8" cy="9.6" rx="4.2" ry="5" fill="#a0a0a0"/><circle cx="8" cy="3.8" r="2.4" fill="#a0a0a0"/><path d="M1.4 6 L4.6 8 M1 10.4 H4 M1.8 14.6 L4.6 12.4 M14.6 6 L11.4 8 M15 10.4 H12 M14.2 14.6 L11.4 12.4 M5.6 0.8 L6.8 2.6 M10.4 0.8 L9.2 2.6" stroke="#a0a0a0" stroke-width="1.1" fill="none"/><path d="M1.6 0.6 L15 15.6" stroke="#141414" stroke-width="2.6"/><path d="M1 1.2 L14.4 15.6" stroke="#a0a0a0" stroke-width="1.1"/></svg>
<svg class="ic" style="left:1845.5px;top:1062px" width="16" height="16" viewBox="0 0 16 16"><ellipse cx="7.8" cy="3.8" rx="6" ry="2.8" fill="#a0a0a0"/><path d="M1.8 5.6 Q7.8 10 13.8 5.6 V8.4 Q7.8 12.6 1.8 8.4Z M1.8 9.8 Q7.8 14.2 13.8 9.8 V12.4 Q7.8 16.6 1.8 12.4Z" fill="#a0a0a0"/><path d="M1.4 0.6 L15.4 15.4" stroke="#141414" stroke-width="2.6"/><path d="M0.8 1.2 L14.8 15.6" stroke="#a0a0a0" stroke-width="1.1"/></svg>
<svg class="ic" style="left:1872px;top:1062px" width="16" height="16" viewBox="0 0 16 16"><path d="M2.2 6 A6.2 6.2 0 0 1 13 4 M13.8 10 A6.2 6.2 0 0 1 3 12" fill="none" stroke="#a0a0a0" stroke-width="1.3"/><path d="M14.6 1.6 V5.6 H10.6Z M1.4 14.4 V10.4 H5.4Z" fill="#a0a0a0"/><circle cx="8" cy="7" r="2.6" fill="#a0a0a0"/><rect x="6.8" y="9.4" width="2.4" height="2" fill="#a0a0a0"/><path d="M1.6 0.6 L15.4 15.4" stroke="#141414" stroke-width="2.6"/><path d="M1 1.2 L14.8 15.6" stroke="#a0a0a0" stroke-width="1.1"/></svg>
<svg class="ic" style="left:1898.5px;top:1062.5px" width="15" height="15" viewBox="0 0 15 15"><circle cx="7.5" cy="7.5" r="6.6" fill="none" stroke="#a0a0a0" stroke-width="1.1"/><path d="M4.6 7.6 L6.8 9.8 L10.6 5.6" fill="none" stroke="#a0a0a0" stroke-width="1.5"/></svg>
</body></html>
